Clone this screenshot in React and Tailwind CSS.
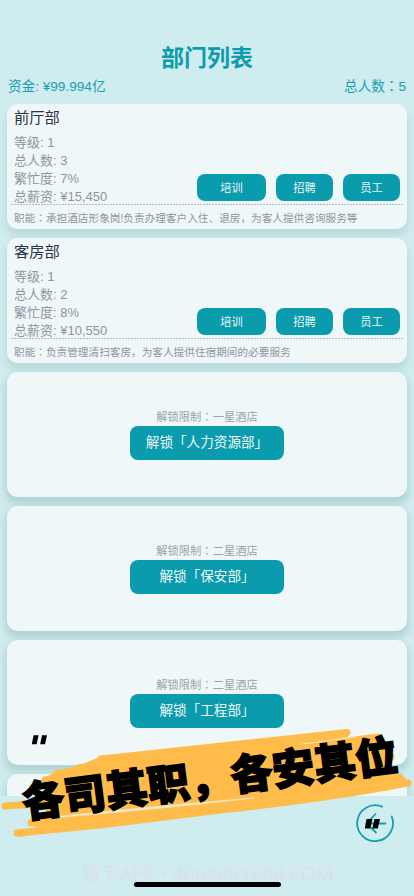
import React from 'react';

const departments = [
  { name: '前厅部', level: 1, staff: 3, busy: '7%', salary: '¥15,450', duty: '承担酒店形象岗!负责办理客户入住、退房，为客人提供咨询服务等' },
  { name: '客房部', level: 1, staff: 2, busy: '8%', salary: '¥10,550', duty: '负责管理清扫客房，为客人提供住宿期间的必要服务' },
];

const locked = [
  { name: '人力资源部', limit: '一星酒店' },
  { name: '保安部', limit: '二星酒店' },
  { name: '工程部', limit: '二星酒店' },
];

const card = 'h-[124.5px] shrink-0 rounded-[11px] bg-[#eff7f9]';
const softShadow = 'shadow-[0_6px_6px_1px_rgba(60,110,110,0.13)]';
const deepShadow = 'shadow-[0_5px_6px_2px_rgba(60,110,110,0.19)]';

// Full-width colon centred in its em box
function Colon() {
  return <span lang="zh-TW" className="font-['Noto_Sans_CJK_TC',sans-serif] leading-none">：</span>;
}

function Action({ children, wide }) {
  return (
    <button className={`flex h-[27px] items-center justify-center rounded-[8px] bg-[#0a9bad] pt-px text-[11.3px] text-[#eaf7f8] ${wide ? 'w-[69px]' : 'w-[57px]'}`}>
      {children}
    </button>
  );
}

function DepartmentCard({ d }) {
  return (
    <section className={`${card} ${softShadow} flex flex-col px-[4px]`}>
      <div className="flex h-[100px] justify-between px-[3px]">
        <div className="text-[13px] leading-[18px] text-[#8f969c]">
          <h2 className="mb-[2px] h-[28px] text-[15.3px] leading-[28px] text-[#2b3444]">{d.name}</h2>
          <p>等级: {d.level}</p>
          <p>总人数: {d.staff}</p>
          <p>繁忙度: {d.busy}</p>
          <p>总薪资: {d.salary}</p>
        </div>
        <div className="flex items-end gap-[10px] pb-[3px]">
          <Action wide>培训</Action>
          <Action>招聘</Action>
          <Action>员工</Action>
        </div>
      </div>
      <div className="h-px shrink-0 bg-[repeating-linear-gradient(90deg,#b0bcbf_0_2px,transparent_2px_3px)]" />
      <p className="whitespace-nowrap pl-[3px] text-[10.65px] leading-[26px] text-[#8f969c]">职能<Colon />{d.duty}</p>
    </section>
  );
}

function LockedCard({ d }) {
  return (
    <section className={`${card} ${deepShadow} flex flex-col items-center pt-[36px]`}>
      <p className="h-[17.5px] text-[11.3px] leading-[18px] text-[#9ca4a9]">解锁限制<Colon />{d.limit}</p>
      <button className="flex h-[34.5px] w-[154px] shrink-0 items-center justify-center rounded-[8px] bg-[#0a9bad] text-[13.6px] text-[#eff9fa]">
        解锁「{d.name}」
      </button>
    </section>
  );
}

function Banner() {
  return (
    <div className="pointer-events-none absolute inset-0">
      <svg className="absolute inset-0" width="414" height="896" viewBox="0 0 414 896" fill="none">
        <path d="M100 757 L348 731 L348 737 L300 744 L380 737 L380 745 L392 757 L384 764 L386 774 L401 774 L411 785 L300 802 Q200 815 100 826 L17 837 L36 827 L30 820 L46 814 L46 777 L57 771 L80 765Z" fill="#ffbc4a" />
        <g stroke="#ffbc4a" strokeWidth="7" strokeLinecap="round" strokeLinejoin="round">
          <path d="M101 759 L347 732.500" />
          <path d="M80 767.500 L220 752" />
          <path d="M57 773.500 L200 757" />
          <path d="M45 780 L200 764" />
          <path d="M5 806 L100 800" />
          <path d="M31 823 L160 812" />
          <path d="M17 833 L100 825 L220 810 Q330 798 408 783" />
          <path d="M280 749 L379 737" />
          <path d="M300 766 L391 757" />
          <path d="M340 781 L399 777" />
        </g>
        <path d="M296 744.500 L356 736.500 L358 737 L307 744Z" fill="#f6ead0" />
        <path d="M58 816.500 Q150 806.500 254 798 Q160 809 58 817.500Z" fill="#eee8cf" stroke="#eee8cf" strokeWidth="0.700" />
        <path d="M33.600 735.200H38.600L36.600 744.300H31.800ZM42 735.200H47L45 744.300H40.200Z" fill="#000" />
      </svg>
      <p className="absolute left-[21px] top-[749.500px] w-[378px] -rotate-[7.300deg] whitespace-nowrap text-center text-[42px] font-black leading-[60px] text-black [-webkit-text-stroke:1.6px_black]">各司其职，各安其位</p>
    </div>
  );
}

function BackButton() {
  return (
    <button className="absolute left-[356px] top-[804px]" aria-label="返回">
      <svg width="39" height="39" viewBox="0 0 39 39" fill="none">
        <path d="M26 2.700 A17.900 17.900 0 1 0 35.700 12.500" stroke="#159daf" strokeWidth="1.800" strokeLinecap="round" />
        <path d="M29.500 19.500H13M19.500 10L10.500 19.500L20 28.500" stroke="#159daf" strokeWidth="1.800" strokeLinecap="round" />
        <path d="M10.500 15h6l-2.200 9.500h-5.500zM18.500 15h5.500l-2.200 9.500h-5.500z" fill="#000" />
      </svg>
    </button>
  );
}

export default function App() {
  return (
    <main lang="zh-CN" className="relative flex h-[896px] w-[414px] flex-col overflow-hidden bg-[#cfecee] font-['Liberation_Sans','Noto_Sans_CJK_SC',sans-serif]">
      <h1 className="mt-[40px] h-[36px] text-center text-[23px] font-bold leading-[37px] text-[#0d9bad]">部门列表</h1>
      <div className="flex h-[22px] items-center justify-between px-[8px] text-[13.6px] leading-[20px] text-[#1a9fb0]">
        <span>资金: ¥99.994亿</span>
        <span>总人数<Colon />5</span>
      </div>
      <div className="flex h-[698px] flex-col gap-[9.5px] overflow-hidden px-[7px] pt-[6px]">
        {departments.map((d) => <DepartmentCard key={d.name} d={d} />)}
        {locked.map((d) => <LockedCard key={d.name} d={d} />)}
        <section className={`${card} ${deepShadow}`} />
      </div>
      <footer className="flex flex-1 flex-col items-center justify-end pb-[9px]">
        <p className="h-[19px] whitespace-nowrap font-['Noto_Sans','Noto_Sans_CJK_SC',sans-serif] text-[19.5px] leading-[20px] text-[#dddff0]">易下APP • 4008891800.COM</p>
        <div className="relative -mt-[1px] h-[5px] w-[147px] rounded-full bg-black" />
      </footer>
      <Banner />
      <BackButton />
    </main>
  );
}
